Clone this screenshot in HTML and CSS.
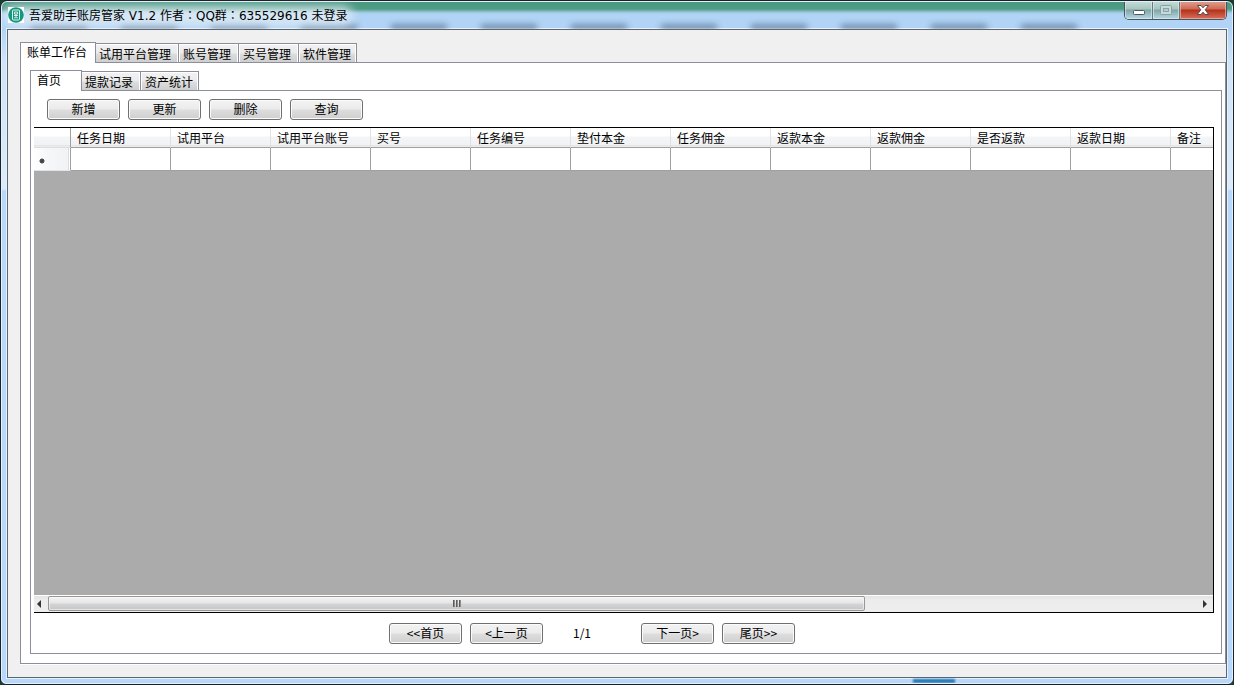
FILE: index.html
```html
<!DOCTYPE html>
<html lang="zh-CN">
<head>
<meta charset="utf-8">
<title>吾爱助手账房管家 V1.2</title>
<link rel="stylesheet" href="styles.css">
</head>
<body>
<div class="window">
  <header class="titlebar">
    <div class="glass-shadows"></div>
    <div class="title-glow"></div>
    <svg class="app-icon" viewBox="0 0 16 16" aria-hidden="true">
      <rect width="16" height="16" fill="#fff"/>
      <circle cx="8" cy="8" r="7.8" fill="#15987f"/>
      <rect x="4.5" y="3" width="7" height="10" rx="1" fill="none" stroke="#e4f7f2"/>
      <path d="M6.5 5h3v2h-3zM8 7v3M6 8.5h4M6 10.8h4" fill="none" stroke="#e4f7f2" stroke-width=".9"/>
    </svg>
    <h1 class="title">吾爱助手账房管家 V1.2 作者<span class="colon" lang="zh-TW">：</span>QQ群<span class="colon" lang="zh-TW">：</span>635529616 未登录</h1>
    <div class="window-controls">
      <button class="control minimize" aria-label="最小化"><svg width="14" height="12" viewBox="0 0 14 12"><rect x="1.5" y="6.5" width="11" height="4" rx="1" fill="#fff" stroke="#4d5665"/></svg></button>
      <button class="control maximize" aria-label="最大化" disabled><svg width="14" height="12" viewBox="0 0 14 12"><rect x="1.5" y="1.5" width="11" height="9" rx="1" fill="#c4dadb" stroke="#8ba1a7"/><rect x="4.5" y="4.5" width="5" height="3" fill="#b3cccf" stroke="#8ba1a7"/></svg></button>
      <button class="control close" aria-label="关闭"><svg width="14" height="12" viewBox="0 0 14 12"><path d="M1.5 1.500h3.500l2 2.300 2-2.300h3.500L9.200 5.800l3.500 4.700H9L7 8.200l-2 2.300H1.300l3.500-4.700z" fill="#fff" stroke="#5a4650"/></svg></button>
    </div>
  </header>
  <main class="client">
    <nav class="tabs" role="tablist">
      <button class="tab selected" role="tab" aria-selected="true">账单工作台</button>
      <button class="tab" role="tab">试用平台管理</button>
      <button class="tab" role="tab">账号管理</button>
      <button class="tab" role="tab">买号管理</button>
      <button class="tab" role="tab">软件管理</button>
    </nav>
    <section class="panel outer">
      <nav class="tabs" role="tablist">
        <button class="tab selected" role="tab" aria-selected="true">首页</button>
        <button class="tab" role="tab">提款记录</button>
        <button class="tab" role="tab">资产统计</button>
      </nav>
      <section class="panel inner">
        <div class="toolbar">
          <button class="button">新增</button>
          <button class="button">更新</button>
          <button class="button">删除</button>
          <button class="button">查询</button>
        </div>
        <div class="grid">
          <div class="grid-view">
            <table class="data">
              <thead>
                <tr>
                  <th class="row-head"></th>
                  <th>任务日期</th><th>试用平台</th><th>试用平台账号</th><th>买号</th><th>任务编号</th><th>垫付本金</th><th>任务佣金</th><th>返款本金</th><th>返款佣金</th><th>是否返款</th><th>返款日期</th><th>备注</th>
                </tr>
              </thead>
              <tbody>
                <tr>
                  <th class="row-head"><svg class="new-row" width="6" height="6" viewBox="0 0 6 6"><circle cx="3" cy="3" r="2" fill="#333"/><path d="M3 0v6M0 3h6M1 1l4 4M5 1L1 5" stroke="#444" stroke-width=".8"/></svg></th>
                  <td></td><td></td><td></td><td></td><td></td><td></td><td></td><td></td><td></td><td></td><td></td><td></td>
                </tr>
              </tbody>
            </table>
          </div>
          <div class="scrollbar">
            <button class="arrow" aria-label="向左滚动"><svg width="4" height="8" viewBox="0 0 4 8"><path d="M4 0v8L0 4z" fill="#333"/></svg></button>
            <div class="track">
              <div class="thumb"><i></i><i></i><i></i></div>
            </div>
            <button class="arrow" aria-label="向右滚动"><svg width="4" height="8" viewBox="0 0 4 8"><path d="M0 0v8l4-4z" fill="#333"/></svg></button>
          </div>
        </div>
        <div class="pager">
          <button class="button">&lt;&lt;首页</button>
          <button class="button">&lt;上一页</button>
          <span class="page">1/1</span>
          <button class="button">下一页&gt;</button>
          <button class="button">尾页&gt;&gt;</button>
        </div>
      </section>
    </section>
  </main>
  <div class="glass-spot"></div>
</div>
</body>
</html>
```
FILE: styles.css
```css
* { box-sizing: border-box; }

body {
  margin: 0;
  background: #1d3a2c;
  color: #000;
  font: 12px/16px "Noto Sans CJK SC", sans-serif;
}

button {
  margin: 0;
  padding: 0;
  color: inherit;
  font: inherit;
}

.window {
  position: relative;
  display: flex;
  flex-direction: column;
  height: 100vh;
  padding: 0 6px 6px;
  overflow: hidden;
  border: 1px solid #1a2129;
  border-radius: 7px 7px 6px 6px;
  background:
    linear-gradient(#4a967f, #4f9d85 8px, #a9cfea 12px, transparent 14px),
    linear-gradient(#b1d3f5 28px, #cfe4f8 60px, #dcebfa 188px, #b7d8fb 190px);
}

.window::after {
  position: absolute;
  inset: 0;
  border: 1px solid #e4f1fb;
  border-radius: 6px;
  content: "";
  pointer-events: none;
}

.titlebar {
  position: relative;
  display: flex;
  flex: none;
  align-items: center;
  gap: 5px;
  height: 28px;
  margin: 0 -6px;
  padding-left: 7px;
  overflow: hidden;
}

.glass-shadows {
  position: absolute;
  inset: 24px 148px 0 30px;
  background: repeating-linear-gradient(90deg, #3f566f 0 56px, transparent 56px 90px);
  opacity: .8;
  filter: blur(3px);
}

.title-glow {
  position: absolute;
  inset: 5px auto 3px 2px;
  width: 350px;
  border-radius: 10px;
  background: #deebf4;
  opacity: .85;
  filter: blur(5px);
}

.app-icon {
  position: relative;
  width: 16px;
  height: 16px;
}

.title {
  position: relative;
  margin: 0;
  font: 12px/16px "DejaVu Sans", "Noto Sans CJK SC", sans-serif;
  white-space: nowrap;
}

.colon { font-family: "Noto Sans CJK TC", sans-serif; }

.window-controls {
  position: relative;
  display: flex;
  align-self: flex-start;
  height: 19px;
  margin: 0 6px 0 auto;
  border: 1px solid #46555f;
  border-top: 0;
  border-radius: 0 0 5px 5px;
  overflow: hidden;
}

.control {
  display: flex;
  align-items: center;
  justify-content: center;
  width: 28px;
  border: 0;
  border-right: 1px solid #667b83;
  background: linear-gradient(#c5ddd6, #a6c5bf 8px, #7fa5a5 9px, #b8d8e6);
  box-shadow: inset 0 0 0 1px #e0f0ef99;
}

.control.maximize { width: 27px; }

.control.close {
  width: 46px;
  border-right: 0;
  background: linear-gradient(#dfa394, #cf6a53 8px, #b3301a 9px, #d8705a);
  box-shadow: inset 0 0 0 1px #f4c9bd99;
}

.client {
  display: flex;
  flex: 1;
  flex-direction: column;
  min-height: 0;
  padding: 12px 0 13px 12px;
  border: 1px solid #5b6673;
  background: #f0f0f0;
  box-shadow: 0 0 0 1px #e6f2fc;
}

.tabs {
  position: relative;
  display: flex;
  flex: none;
  align-items: flex-end;
  height: 21px;
  margin-bottom: -1px;
}

.tab {
  height: 19px;
  margin-bottom: 1px;
  padding: 1px 7px 0 4px;
  border: solid #8c8e9b;
  border-width: 1px 1px 0 0;
  background: linear-gradient(#f2f2f2, #ebebeb 9px, #dddddd 10px, #cfcfcf);
  box-shadow: inset 1px 1px #fff, inset -1px 0 #fff;
  line-height: 16px;
  white-space: nowrap;
}

.tab:last-child { padding-right: 5px; }

.tab.selected {
  z-index: 1;
  height: 21px;
  margin: 0 -1px 0 0;
  padding: 0 8px 2px 6px;
  border-left-width: 1px;
  background: #fff;
}

.panel {
  display: flex;
  flex: 1;
  flex-direction: column;
  min-height: 0;
  border: 1px solid #8c8e9b;
  background: #fff;
}

.outer {
  padding: 7px 3px 9px 9px;
  box-shadow: 0 1px #fff;
}

.outer .tab.selected { padding-right: 20px; }

.toolbar {
  display: flex;
  gap: 8px;
  padding: 8px 16px 7px;
}

.button {
  width: 73px;
  height: 21px;
  padding-bottom: 2px;
  border: 1px solid #707070;
  border-radius: 3px;
  background: linear-gradient(#f3f3f3, #ebebeb 9px, #dddddd 10px, #cfcfcf);
  box-shadow: inset 0 0 0 1px #fbfbfb;
  line-height: 17px;
}

.grid {
  display: flex;
  flex: 1;
  flex-direction: column;
  min-height: 0;
  margin: 0 7px 0 3px;
  border: solid #000;
  border-width: 1px 1px 1px 0;
  background: #ababab;
}

.grid-view {
  flex: 1;
  min-height: 0;
  overflow: hidden;
}

.data {
  width: 1237px;
  table-layout: fixed;
  border-spacing: 0;
}

.data th,
.data td {
  width: 100px;
  height: 23px;
  padding: 0;
  border: solid #a0a0a0;
  border-width: 0 1px 1px 0;
  background: #fff;
  font-weight: 400;
  text-align: left;
}

.data thead th {
  height: 20px;
  padding: 1px 0 0 6px;
  border-color: #e0e1e4 #e0e1e4 #a0a0a0;
  background: linear-gradient(#fff 8px, #f4f5f7 9px, #f1f2f4 17px, #d8d9db 18px, #fff 19px);
  line-height: 18px;
}

.data .row-head { width: 37px; }

.data thead .row-head {
  border-right-color: #a0a0a0;
  border-bottom-color: #dcdde0;
}

.data tbody .row-head {
  padding-left: 5px;
  border-bottom-color: #e1e2e5;
  background: linear-gradient(90deg, #fff, #f6f7f9 12px, #f1f2f5);
  box-shadow: inset -1px 0 #fff, inset -2px 0 #dcdde0;
}

.new-row {
  display: block;
  margin-top: 3px;
}

.scrollbar {
  display: flex;
  flex: none;
  height: 17px;
  border-top: 1px solid #fff;
  background: linear-gradient(#e3e3e3, #ececec 4px, #eeeeee);
}

.arrow {
  display: flex;
  align-items: center;
  justify-content: center;
  width: 14px;
  padding-right: 5px;
  border: 0;
  background: none;
}

.track + .arrow { padding-right: 3px; }

.track { flex: 1; }

.thumb {
  display: flex;
  align-items: center;
  justify-content: center;
  gap: 1px;
  width: 71%;
  height: 15px;
  border: 1px solid #979797;
  border-radius: 2px;
  background: linear-gradient(#f4f4f4, #e6e6e6 6px, #d3d4d6 7px, #c4c5c8);
  box-shadow: inset 0 0 0 1px #fafafa99;
}

.thumb i {
  width: 2px;
  height: 7px;
  background: linear-gradient(90deg, #444, #a5a5a5);
}

.pager {
  display: flex;
  align-items: center;
  justify-content: center;
  gap: 8px;
  padding: 10px 68px 9px 0;
}

.page {
  width: 82px;
  padding: 0 20px 2px 0;
  text-align: center;
}

.glass-spot {
  position: absolute;
  right: 278px;
  bottom: 1px;
  width: 42px;
  height: 4px;
  background: #2277b4;
  filter: blur(1px);
}
```
